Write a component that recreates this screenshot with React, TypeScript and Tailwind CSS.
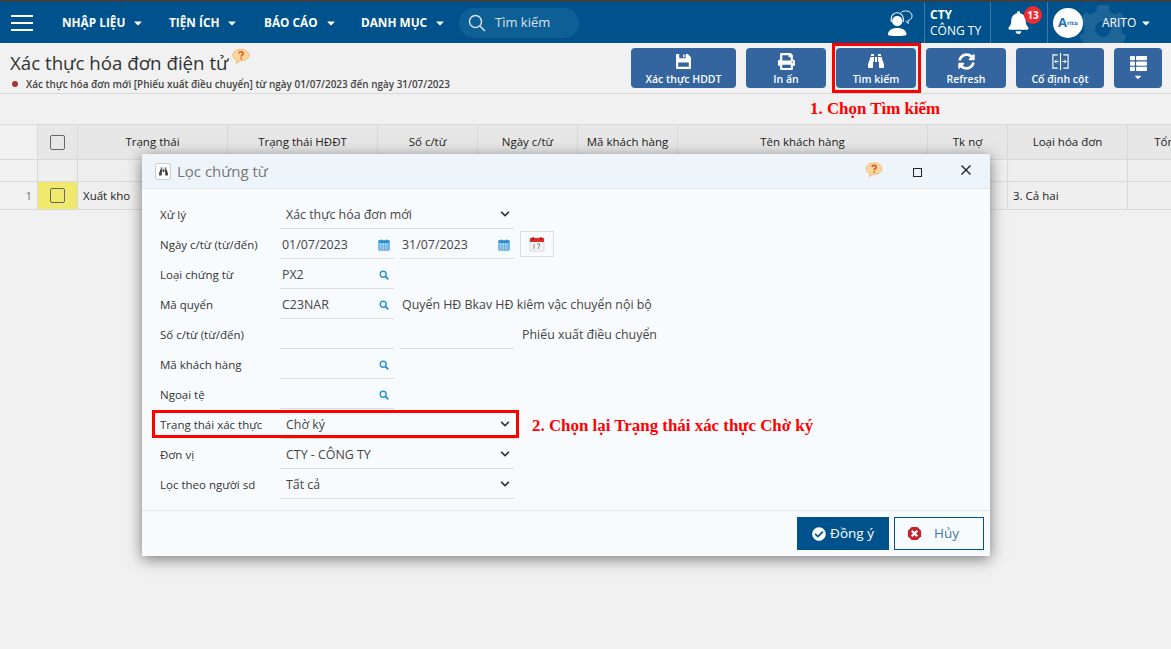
import { ReactNode } from 'react'
import { FaBell, FaBinoculars, FaCaretDown, FaCheckCircle, FaCog, FaChevronDown, FaPrint, FaSyncAlt, FaThList } from 'react-icons/fa'

const navItems = [
  { label: 'NHẬP LIỆU', cls: 'w-[107px]' },
  { label: 'TIỆN ÍCH', cls: 'w-[95px]' },
  { label: 'BÁO CÁO', cls: 'w-[97px]' },
  { label: 'DANH MỤC', cls: 'w-[98px]' },
]

const columns = [
  { label: '', cls: 'w-[38px]' },
  { label: '', cls: 'w-[40px]' },
  { label: 'Trạng thái', cls: 'w-[150px]' },
  { label: 'Trạng thái HĐĐT', cls: 'w-[150px]' },
  { label: 'Số c/từ', cls: 'w-[100px]' },
  { label: 'Ngày c/từ', cls: 'w-[100px]' },
  { label: 'Mã khách hàng', cls: 'w-[100px]' },
  { label: 'Tên khách hàng', cls: 'w-[250px]' },
  { label: 'Tk nợ', cls: 'w-[80px]' },
  { label: 'Loại hóa đơn', cls: 'w-[120px]' },
  { label: 'Tổng', cls: 'w-[80px]' },
]

function HelpBubble({ className }: { className: string }) {
  return (
    <svg viewBox="0 0 20 18" className={className}>
      <path d="M10 1C5 1 1 3.8 1 7.5c0 2.6 2 4.6 4.6 5.6L4.5 16.5l4.6-2.7h1C15 13.8 19 11 19 7.5S15 1 10 1z" fill="#fbd79b" stroke="#eeb877" strokeWidth="1" />
      <path d="M7.6 5.6c.2-1.2 1.2-1.8 2.4-1.8 1.4 0 2.4.8 2.4 2 0 1.800-2.200 1.700-2.200 3.400" fill="none" stroke="#e2512a" strokeWidth="1.700" />
      <circle cx="10.200" cy="11.300" r="1" fill="#e2512a" />
    </svg>
  )
}

function ToolButton({ icon, label, cls }: { icon: ReactNode; label: string; cls: string }) {
  return (
    <button className={`flex h-10 flex-col items-center justify-between rounded-sm bg-[#34659f] pt-[3px] pb-[2px] text-[10.500px] leading-[14px] font-semibold text-white ${cls}`}>
      <span className="flex h-[20px] items-center">{icon}</span>
      <span>{label}</span>
    </button>
  )
}

function CheckBox() {
  return <span className="block h-[15px] w-[15px] rounded-[2px] border border-[#666]" />
}

function CalendarIcon() {
  return (
    <svg viewBox="0 0 14 14" className="h-[12px] w-[12px] shrink-0">
      <rect x="1" y="2" width="12" height="11" fill="#bfe0f5" stroke="#2a8fd0" strokeWidth="1" />
      <rect x="1" y="2" width="12" height="3" fill="#2a8fd0" />
      <path d="M4 0.500v3M10 0.500v3" stroke="#2a8fd0" strokeWidth="1.500" />
      <path d="M1 8h12M1 10.500h12M4.500 5v8M7.500 5v8M10.500 5v8" stroke="#2a8fd0" strokeWidth="0.600" />
    </svg>
  )
}

function LensIcon() {
  return (
    <svg viewBox="0 0 10 10" className="h-[10px] w-[10px] shrink-0" fill="none" stroke="#2a94d6" strokeWidth="1.400">
      <circle cx="4.200" cy="4.200" r="3" />
      <path d="M6.500 6.500L9.300 9.300" strokeWidth="1.800" />
    </svg>
  )
}

function TextField({ value, width, icon, pad }: { value?: string; width: string; icon?: ReactNode; pad: string }) {
  return (
    <div className={`flex h-[30px] items-center justify-between border-b border-[#dcdcdc] pl-[2px] ${pad} ${width}`}>
      <span className="pt-[3px]">{value}</span>
      {icon && <span className="pt-[3px]">{icon}</span>}
    </div>
  )
}

function Lookup({ value }: { value?: string }) {
  return <TextField value={value} width="w-[114px]" pad="pr-[5px]" icon={<LensIcon />} />
}

function SelectField({ value }: { value: string }) {
  return (
    <div className="flex h-[30px] w-[234px] items-center justify-between border-b border-[#dcdcdc] pr-[4px] pl-[6px]">
      <span className="pt-[3px]">{value}</span>
      <FaChevronDown className="h-[10px] w-[10px] text-[#333]" />
    </div>
  )
}

function FormRow({ label, children }: { label: string; children: ReactNode }) {
  return (
    <div className="flex h-[30px] items-center">
      <div className="w-[120px] shrink-0 pt-[1px] text-[11.500px] text-[#333]">{label}</div>
      <div className="flex items-center gap-[6px]">{children}</div>
    </div>
  )
}

export default function App() {
  return (
    <div className="relative h-[649px] w-[1171px] overflow-hidden bg-[#f1f1f1] font-['Open_Sans',sans-serif] text-[11.500px] text-[#222]">
      <div className="h-[2px] bg-[#3c3f44]" />

      {/* top bar */}
      <header className="flex h-[41px] items-center bg-[#00528c] text-white">
        <div className="flex w-[62px] flex-col gap-[5px] pl-[11px]">
          <span className="block h-[2px] w-[22px] bg-white" />
          <span className="block h-[2px] w-[22px] bg-white" />
          <span className="block h-[2px] w-[22px] bg-white" />
        </div>
        {navItems.map((n) => (
          <div key={n.label} className={`flex items-center gap-[7px] text-[11.800px] font-bold ${n.cls}`}>
            {n.label}
            <FaCaretDown className="h-[12px] w-[12px]" />
          </div>
        ))}
        <div className="flex h-[30px] w-[120px] items-center gap-[9px] rounded-full bg-[#0f5f97] pl-[9px] text-[13px] text-[#d5e3ee]">
          <svg viewBox="0 0 18 18" className="h-[18px] w-[18px]" fill="none" stroke="#d5e3ee" strokeWidth="1.500">
            <circle cx="7.500" cy="7.500" r="6" />
            <path d="M12 12l5 5" />
          </svg>
          Tìm kiếm
        </div>
        <div className="ml-auto flex h-full items-center">
          <div className="flex h-full w-[45px] items-center justify-end pr-[11px]">
            <svg viewBox="0 0 28 28" className="h-[26px] w-[26px]" fill="white">
              <circle cx="11" cy="12" r="5.500" />
              <path d="M1 27c0-5 4-7.500 10-7.500s10 2.500 10 7.500c-2 .8-5 1-10 1s-8-.2-10-1z" />
              <path d="M4.500 13V9.500C4.500 5.500 7.500 3 11 3s6.500 2.500 6.500 6.500V13" fill="none" stroke="white" strokeWidth="1.200" />
              <path d="M15 3c1-1.500 3-2 5-2 4 0 7 2.200 7 5.500 0 2.500-2 4.500-4.500 5l.5 3-3-2.500" fill="none" stroke="white" strokeWidth="1" />
            </svg>
          </div>
          <div className="flex h-full w-[66px] flex-col justify-center border-l border-[#3f7aa6] pl-[5px] text-[12px] leading-[16px]">
            <span className="font-bold">CTY</span>
            <span>CÔNG TY</span>
          </div>
          <div className="relative flex h-full w-[57px] items-center border-l border-[#3f7aa6] pl-[16px]">
            <FaBell className="h-[23px] w-[23px]" />
            <span className="absolute top-[4px] left-[33px] flex h-[18px] w-[18px] items-center justify-center rounded-full bg-[#ee2a33] text-[10px] font-bold">13</span>
          </div>
          <div className="relative flex h-full w-[124px] items-center overflow-hidden border-l border-[#3f7aa6] pl-[5px]">
            <FaCog className="absolute top-[2px] left-[30px] h-[50px] w-[50px] text-[#1d6498]" />
            <span className="relative flex h-[30px] w-[30px] items-center justify-center rounded-full bg-white text-[13px] leading-none font-bold text-[#1c6fb8]">
              A<span className="text-[6px]">rito</span>
            </span>
            <span className="relative ml-[19px] text-[12px]">ARITO</span>
            <FaCaretDown className="relative ml-[4px] h-[12px] w-[12px]" />
          </div>
        </div>
      </header>

      {/* title and toolbar */}
      <section className="flex h-[51px] border-b border-[#d9d9d9] pt-[5px] pr-[9px] pl-[10px]">
        <div className="min-w-0 flex-1">
          <div className="flex items-start">
            <h1 className="pt-[2px] text-[18.700px] leading-[25px] text-[#333]">Xác thực hóa đơn điện tử</h1>
            <HelpBubble className="mt-0 ml-[4px] h-[17px] w-[18px]" />
          </div>
          <div className="mt-[2px] flex items-center gap-[8px] pl-[2px] text-[9.950px] leading-[14px] font-semibold text-[#444]">
            <span className="h-[6px] w-[6px] rounded-full bg-[#a93338]" />
            Xác thực hóa đơn mới [Phiếu xuất điều chuyển] từ ngày 01/07/2023 đến ngày 31/07/2023
          </div>
        </div>
        <div className="flex gap-[10px]">
          <ToolButton
            cls="w-[105px]"
            icon={
              <svg viewBox="0 0 16 16" className="h-[17px] w-[17px]">
                <path d="M1 1h11l3 3v11H1z" fill="white" />
                <path d="M4 1h6v4H4zM3 9h10v4H3z" fill="#34659f" />
                <path d="M7.500 1.500h1.500v2.500H7.500z" fill="white" />
              </svg>
            }
            label="Xác thực HDDT"
          />
          <ToolButton cls="w-[80px]" icon={<FaPrint className="h-[17px] w-[17px]" />} label="In ấn" />
          <ToolButton cls="w-[80px]" icon={<FaBinoculars className="h-[16px] w-[16px]" />} label="Tìm kiếm" />
          <ToolButton cls="w-[80px]" icon={<FaSyncAlt className="h-[17px] w-[17px]" />} label="Refresh" />
          <ToolButton
            cls="w-[88px]"
            icon={
              <svg viewBox="0 0 20 20" className="h-[19px] w-[19px]" fill="none" stroke="white" strokeWidth="1.200">
                <path d="M7 3H2v14h5M13 3h5v14h-5M10 1v18" />
                <path d="M4 10h4M6 8l-2 2 2 2M16 10h-4M14 8l2 2-2 2" strokeWidth="1" />
              </svg>
            }
            label="Cố định cột"
          />
          <button className="flex h-10 w-[48px] flex-col items-center justify-center rounded-sm bg-[#34659f] text-white">
            <FaThList className="h-[17px] w-[17px]" />
            <FaCaretDown className="h-[10px] w-[10px]" />
          </button>
        </div>
      </section>

      {/* annotation row */}
      <div className="flex h-[30px] items-center pl-[810px] font-['Liberation_Serif',serif] text-[16.900px] font-bold text-[#ff0000]">1. Chọn Tìm kiếm</div>

      {/* grid */}
      <div className="flex h-[36px] border-y border-[#d9d9d9]">
        {columns.map((c, i) => (
          <div key={i} className={`flex shrink-0 items-center justify-center whitespace-nowrap border-r border-[#d9d9d9] ${i === 0 ? 'bg-[#f1f1f1]' : 'bg-[#e7e7e7]'} ${c.cls}`}>
            {i === 1 ? <CheckBox /> : c.label}
          </div>
        ))}
      </div>
      <div className="flex h-[22px] border-b border-[#d9d9d9]">
        {columns.map((c, i) => (
          <div key={i} className={`shrink-0 border-r border-[#d9d9d9] ${i === 0 ? 'bg-[#f1f1f1]' : 'bg-[#efefef]'} ${c.cls}`} />
        ))}
      </div>
      <div className="flex h-[28px] border-b border-[#d9d9d9]">
        {columns.map((c, i) => (
          <div key={i} className={`flex shrink-0 items-center border-r border-[#d9d9d9] ${i === 1 ? 'justify-center bg-[#f0e96e]' : 'bg-[#efefef] px-[5px]'} ${i === 0 ? 'justify-end bg-[#f1f1f1] text-[#777]' : ''} ${c.cls}`}>
            {i === 0 && '1'}
            {i === 1 && <CheckBox />}
            {i === 2 && 'Xuất kho'}
            {i === 9 && '3. Cả hai'}
          </div>
        ))}
      </div>

      {/* filter dialog */}
      <div className="absolute top-[154px] left-[142px] h-[402px] w-[848px] bg-[#f8fbfe] text-[12.400px] text-[#444] shadow-[0_3px_14px_rgba(0,0,0,0.5)]">
        <div className="flex h-[35px] items-center border-b border-[#e3e6e9] bg-[#edf4fa] pl-[13px]">
          <span className="relative flex h-[17px] w-[16px] items-center justify-center rounded-[2px] border border-[#ccc] bg-white">
            <FaBinoculars className="h-[9px] w-[9px] text-[#444]" />
          </span>
          <span className="ml-[6px] text-[15px] text-[#777]">Lọc chứng từ</span>
          <HelpBubble className="mb-[3px] ml-auto h-[16px] w-[18px]" />
          <span className="mt-[3px] ml-[30px] h-[9px] w-[9px] border border-[#222]" />
          <svg viewBox="0 0 10 10" className="mr-[19px] mb-[2px] ml-[39px] h-[10px] w-[10px]" fill="none" stroke="#222" strokeWidth="1.400">
            <path d="M0.500 0.500l9 9M9.500 0.500l-9 9" />
          </svg>
        </div>

        <div className="h-[322px] border-b border-[#e3e6e9] pt-[10px] pl-[18px]">
          <FormRow label="Xử lý"><SelectField value="Xác thực hóa đơn mới" /></FormRow>
          <FormRow label="Ngày c/từ (từ/đến)">
            <TextField value="01/07/2023" width="w-[114px]" pad="pr-[4px]" icon={<CalendarIcon />} />
            <TextField value="31/07/2023" width="w-[114px]" pad="pr-[4px]" icon={<CalendarIcon />} />
            <span className="flex h-[26px] w-[34px] items-center justify-center border border-[#ddd]">
              <svg viewBox="0 0 16 16" className="h-[16px] w-[16px]">
                <rect x="1" y="2" width="14" height="13" fill="#f4f4f4" stroke="#bbb" strokeWidth="0.500" />
                <rect x="1" y="2" width="14" height="4" fill="#e02b2b" />
                <path d="M4 1v3M12 1v3" stroke="#a11" strokeWidth="1.300" />
                <path d="M5 8v5M8 8h3l-2 5" fill="none" stroke="#888" strokeWidth="1" />
              </svg>
            </span>
          </FormRow>
          <FormRow label="Loại chứng từ"><Lookup value="PX2" /></FormRow>
          <FormRow label="Mã quyển">
            <Lookup value="C23NAR" />
            <span className="ml-[2px] whitespace-nowrap pt-[3px]">Quyển HĐ Bkav HĐ kiêm vậc chuyển nội bộ</span>
          </FormRow>
          <FormRow label="Số c/từ (từ/đến)">
            <TextField width="w-[114px]" pad="pr-[5px]" />
            <TextField width="w-[114px]" pad="pr-[5px]" />
            <span className="ml-[2px] whitespace-nowrap pt-[3px]">Phiếu xuất điều chuyển</span>
          </FormRow>
          <FormRow label="Mã khách hàng"><Lookup /></FormRow>
          <FormRow label="Ngoại tệ"><Lookup /></FormRow>
          <FormRow label="Trạng thái xác thực"><SelectField value="Chờ ký" /></FormRow>
          <FormRow label="Đơn vị"><SelectField value="CTY - CÔNG TY" /></FormRow>
          <FormRow label="Lọc theo người sd"><SelectField value="Tất cả" /></FormRow>
        </div>

        <div className="flex h-[45px] items-center justify-end gap-[5px] pr-[6px]">
          <button className="flex h-[33px] w-[92px] items-center justify-center gap-[4px] bg-[#00528c] text-[13.500px] text-white">
            <FaCheckCircle className="h-[14px] w-[14px]" />
            Đồng ý
          </button>
          <button className="flex h-[33px] w-[90px] items-center border border-[#00528c] pl-[12px] text-[13.500px] text-[#3f79a8]">
            <svg viewBox="0 0 16 16" className="h-[15px] w-[15px]">
              <path d="M5 1h6l4 4v6l-4 4H5l-4-4V5z" fill="#c8202b" />
              <path d="M5 5l6 6M11 5l-6 6" stroke="white" strokeWidth="2.400" />
            </svg>
            <span className="ml-[12px]">Hủy</span>
          </button>
        </div>
      </div>

      {/* red callouts */}
      <div className="absolute top-[43px] left-[832px] h-[50px] w-[89px] border-[3px] border-[#ff0000]" />
      <div className="absolute top-[410px] left-[152px] h-[28px] w-[367px] border-[3px] border-[#ff0000]" />
      <div className="absolute top-[413px] left-[532px] font-['Liberation_Serif',serif] text-[16.900px] font-bold text-[#ff0000]">2. Chọn lại Trạng thái xác thực Chờ ký</div>
    </div>
  )
}
